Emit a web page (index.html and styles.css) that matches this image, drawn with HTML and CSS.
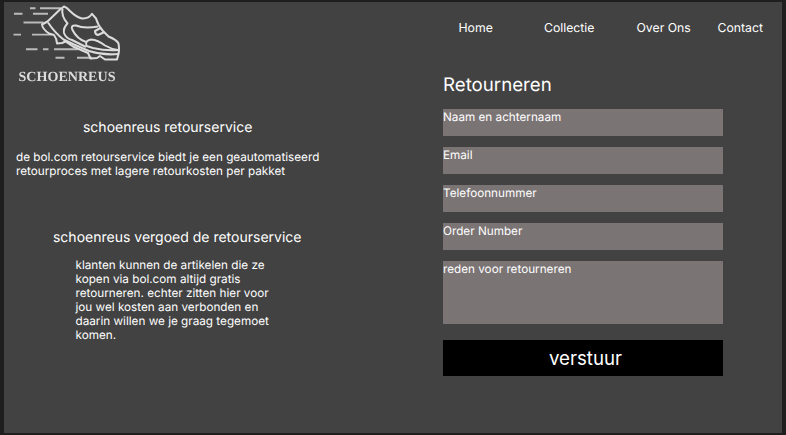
FILE: index.html
```html
<!DOCTYPE html>
<html lang="nl">
<head>
<meta charset="utf-8">
<title>Schoenreus - Retourneren</title>
<link rel="stylesheet" href="styles.css">
</head>
<body>
<div class="page">
  <div class="info">
    <svg class="logo" viewBox="0 0 126 88" role="img" aria-label="Schoenreus">
      <g class="speed">
        <path d="M30 8.300h5.500M40 8.300h21M14 13.800h8.500M33 13.800h15M23.500 22.500h20M13.500 34.600h7.500M32 34.600h20M26 49.200h11.500M43 49.200h5.500M54 49.200h24M55.500 57.700h9M77 57.700h15"/>
      </g>
      <g class="shoe">
        <path d="M64 6.500L60 9.500L47.500 21.500L42 24.500Q42.500 29 49 33.500L54 35Q57 39 57 43.500L62 43L65.500 41.500L73 46.500L88 53L90.500 58.500L97 58L100 56L105 59.500H117L118.500 54Q119.500 49 118.500 43.500Q117 40 108.500 36.500L103 31Q98 25.500 96 18.500L92 13.800Q88.500 19 82 18.500Q76 17 70 11Q67 7.500 64 6.500Z"/>
        <path d="M48 22.500Q55 33 63.500 39.500L74 44.500L89 51Q103 55.500 118.500 54"/>
        <path d="M62.500 8.500Q61 16 67.500 23.500Q63 28 64 33Q66 38.500 72 40L86 47"/>
        <path d="M98 26.500Q84 29 76 25.500Q70 25 72.500 30Q77 39 86 42"/>
        <path d="M118 50Q106 51 93 48L86.500 46Q84.500 40.500 91 39.500Q98 40 105 45.500Q111 49 118 50"/>
        <path d="M100.500 28L95 31Q95 34.500 98 35L104.500 32"/>
      </g>
      <text class="wordmark" x="18.500" y="80.500" textLength="97" lengthAdjust="spacingAndGlyphs">SCHOENREUS</text>
    </svg>
    <section class="service">
      <h2>schoenreus retourservice</h2>
      <p>de bol.com retourservice biedt je een geautomatiseerd<br>retourproces met lagere retourkosten per pakket</p>
    </section>
    <section class="costs">
      <h2>schoenreus vergoed de retourservice</h2>
      <p>klanten kunnen de artikelen die ze<br>kopen via bol.com altijd gratis<br>retourneren. echter zitten hier voor<br>jou wel kosten aan verbonden en<br>daarin willen we je graag tegemoet<br>komen.</p>
    </section>
  </div>
  <div class="main">
    <nav>
      <a>Home</a><a>Collectie</a><a>Over Ons</a><a>Contact</a>
    </nav>
    <form>
      <h1>Retourneren</h1>
      <div class="field">Naam en achternaam</div>
      <div class="field">Email</div>
      <div class="field">Telefoonnummer</div>
      <div class="field">Order Number</div>
      <div class="field reason">reden voor retourneren</div>
      <button type="button">verstuur</button>
    </form>
  </div>
</div>
</body>
</html>
```
FILE: styles.css
```css
* { box-sizing: border-box; }
body {
  margin: 0;
  height: 435px;
  padding: 2px 4px 2px 3.670px;
  background: #1e1e1e;
  color: #fff;
  font: 11.720px/14px Inter, sans-serif;
  text-rendering: geometricPrecision;
  overflow: hidden;
}
.page {
  display: grid;
  grid-template-columns: 439.330px 1fr;
  height: 431px;
  background: #424242;
}
h1, h2, p { margin: 0; font-weight: 400; }
.logo {
  display: block;
  width: 126px;
  height: 88px;
  margin: -2px 0 0 -3.670px;
  fill: none;
  stroke-linejoin: round;
  filter: blur(0.350px);
}
.speed { stroke: #bcbaba; stroke-width: 1.900; }
.shoe { stroke: #dddcdc; stroke-width: 2; }
.wordmark {
  fill: #dddcdc;
  font: bold 14px "Liberation Serif", serif;
}
h2 { font-size: 14px; line-height: 18px; }
.service { padding: 31px 0 0 12.330px; }
.service h2 { padding-left: 67px; }
.service p { margin-top: 13px; }
.costs { padding: 51px 0 0 49.330px; }
.costs p { margin: 11px 0 0 22.500px; }
nav {
  display: grid;
  grid-template-columns: 85.500px 92.500px 81px auto;
  padding: 18px 0 0 15.500px;
  font-size: 12.250px;
  line-height: 16px;
}
form { width: 280px; margin-top: 35px; }
h1 { font-size: 18.700px; line-height: 26px; padding-top: 1px; margin-bottom: 11.300px; }
.field {
  height: 26.700px;
  margin-bottom: 11.300px;
  padding-top: 1px;
  background: #7b7474;
}
.reason { height: 62.500px; margin-bottom: 16.300px; }
button {
  display: block;
  width: 100%;
  height: 35.500px;
  padding: 1px 0 0 5px;
  border: 0;
  background: #000;
  color: #fff;
  font: 18.700px/35px Inter, sans-serif;
}
```
